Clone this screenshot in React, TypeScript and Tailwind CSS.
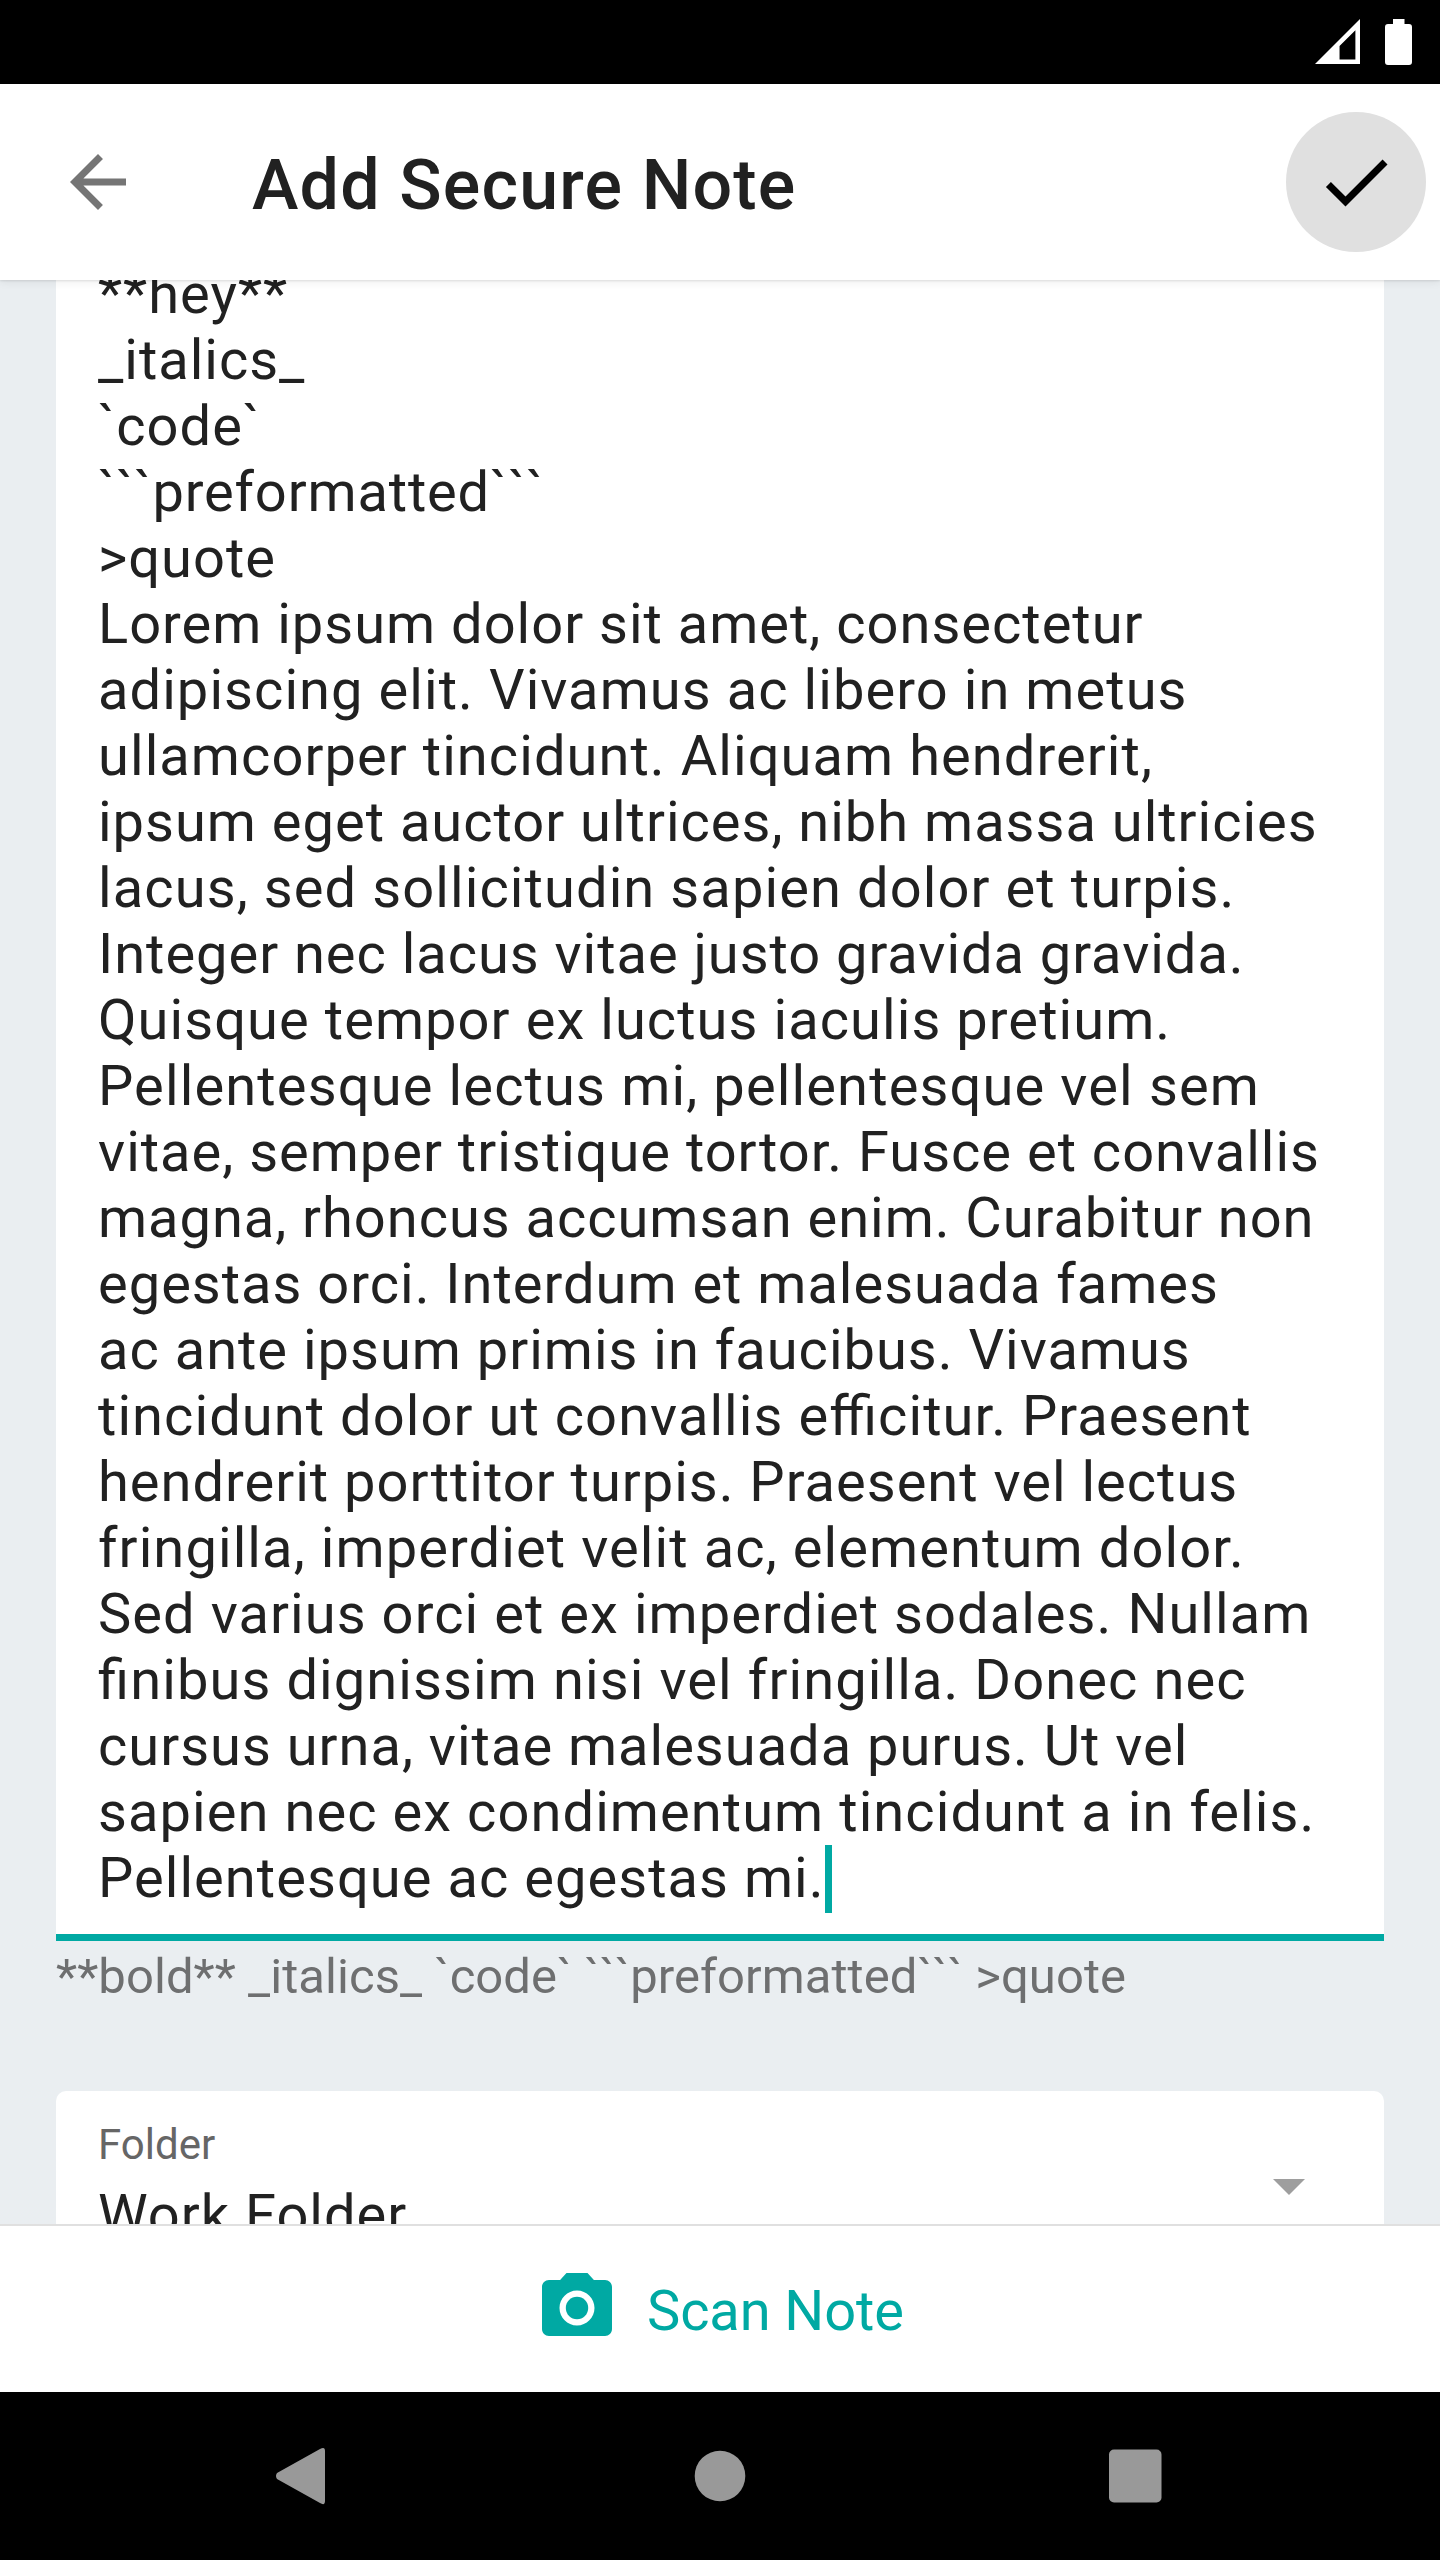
const lines: [string, string?][] = [
  ['**hey**'],
  ['_italics_'],
  ['`code`'],
  ['```preformatted```', 'tracking-[0.84px]'],
  ['>quote'],
  ['Lorem ipsum dolor sit amet, consectetur'],
  ['adipiscing elit. Vivamus ac libero in metus', 'tracking-[1.07px]'],
  ['ullamcorper tincidunt. Aliquam hendrerit,', 'tracking-[1.07px]'],
  ['ipsum eget auctor ultrices, nibh massa ultricies'],
  ['lacus, sed sollicitudin sapien dolor et turpis.', 'tracking-[1.1px]'],
  ['Integer nec lacus vitae justo gravida gravida.', 'tracking-[0.97px]'],
  ['Quisque tempor ex luctus iaculis pretium.', 'tracking-[1.07px]'],
  ['Pellentesque lectus mi, pellentesque vel sem', 'tracking-[1.14px]'],
  ['vitae, semper tristique tortor. Fusce et convallis'],
  ['magna, rhoncus accumsan enim. Curabitur non', 'tracking-[0.97px]'],
  ['egestas orci. Interdum et malesuada fames'],
  ['ac ante ipsum primis in faucibus. Vivamus'],
  ['tincidunt dolor ut convallis efficitur. Praesent', 'tracking-[1.07px]'],
  ['hendrerit porttitor turpis. Praesent vel lectus'],
  ['fringilla, imperdiet velit ac, elementum dolor.', 'tracking-[1.1px]'],
  ['Sed varius orci et ex imperdiet sodales. Nullam', 'tracking-[1.07px]'],
  ['finibus dignissim nisi vel fringilla. Donec nec', 'tracking-[1.1px]'],
  ['cursus urna, vitae malesuada purus. Ut vel'],
  ['sapien nec ex condimentum tincidunt a in felis.', 'tracking-[1.07px]'],
  ['Pellentesque ac egestas mi.', 'tracking-[1.05px]'],
];

export default function App() {
  return (
    <div className="flex h-[2560px] w-[1440px] flex-col overflow-hidden bg-[#eaeef1] font-['Roboto',sans-serif] text-[#212121]">
      <div className="flex h-[84px] shrink-0 items-center justify-end gap-[25px] bg-black pr-[28px]">
        <svg className="-mt-px" width="45" height="45" viewBox="0 0 44 44"><path fillRule="evenodd" d="M44 0V44H0ZM39.500 11V39.500H24V26.500Z" fill="#fff" /></svg>
        <svg width="27" height="46" viewBox="0 0 27 46"><path d="M8 0H19.500V5H24Q27 5 27 8V43Q27 46 24 46H3Q0 46 0 43V8Q0 5 3 5H8Z" fill="#fff" /></svg>
      </div>
      <header className="relative z-10 flex h-[196px] shrink-0 items-center bg-white pr-[14px] pl-[56px] shadow-[0_1px_2px_rgba(0,0,0,0.1),0_3px_8px_rgba(0,0,0,0.06)]">
        <svg width="84" height="84" viewBox="0 0 24 24" fill="#757575"><path d="M20 11H7.830l5.590-5.590L12 4l-8 8 8 8 1.410-1.410L7.830 13H20v-2z" /></svg>
        <h1 className="mt-[7px] ml-[112px] text-[70px] font-medium tracking-[1.15px]">Add Secure Note</h1>
        <div className="ml-auto flex size-[140px] items-center justify-center rounded-full bg-[#e0e0e0]">
          <svg width="84" height="84" viewBox="0 0 24 24"><path d="M9 16.170L4.830 12l-1.420 1.410L9 19 21 7l-1.410-1.410z" /></svg>
        </div>
      </header>
      <main className="min-h-0 flex-1 overflow-hidden px-[56px]">
        <div className="flow-root h-[1661px] border-b-[7px] border-[#00a9a3] bg-white px-[42px]">
          <div className="-mt-[19px] text-[56px] leading-[66px] tracking-[1px] whitespace-pre [font-feature-settings:'liga'_1]">
            {lines.map(([line, tracking], i) => (
              <div key={i} className="flex h-[66px] items-start">
                <span className={tracking}>{line}</span>
                {i === lines.length - 1 && <span className="h-[68px] w-[7px] shrink-0 bg-[#00a9a3]" />}
              </div>
            ))}
          </div>
        </div>
        <p className="mt-[8px] text-[49px] leading-[56px] tracking-[0.06px] text-[#6e6f70]">**bold** _italics_ `code` ```preformatted``` &gt;quote</p>
        <div className="mt-[86px] flex h-[196px] items-start justify-between rounded-[10px] bg-white pr-[79px] pl-[42px]">
          <div>
            <div className="mt-[29px] text-[42px] leading-[50px] text-[#666]">Folder</div>
            <div className="mt-[12px] text-[56px] leading-[66px] tracking-[1px]">Work Folder</div>
          </div>
          <svg className="mt-[88px]" width="32" height="16" viewBox="0 0 32 16"><path d="M0 0H32L16 16Z" fill="#9e9e9e" /></svg>
        </div>
      </main>
      <div className="flex h-[168px] shrink-0 items-start border-t-2 border-[#e0e0e0] bg-white pl-[535px] text-[#00a9a3]">
        <svg className="mt-[40px]" width="84" height="84" viewBox="0 0 24 24" fill="currentColor"><path fillRule="evenodd" d="M9 2L7.170 4H4c-1.100 0-2 .9-2 2v12c0 1.100.9 2 2 2h16c1.100 0 2-.9 2-2V6c0-1.100-.9-2-2-2h-3.170L15 2H9zm3 15c-2.760 0-5-2.240-5-5s2.240-5 5-5 5 2.240 5 5-2.240 5-5 5z" /><circle cx="12" cy="12" r="3.200" /></svg>
        <span className="mt-[52px] ml-[28px] text-[56px] leading-[66px] tracking-[-0.1px]">Scan Note</span>
      </div>
      <nav className="h-[168px] shrink-0 bg-black">
        <svg width="1440" height="168" fill="#999"><path d="M277 81L320 57Q325 54 325 59V109Q325 114 320 111L277 87Q275 84 277 81Z" /><circle cx="720" cy="84" r="25.300" /><rect x="1109" y="57.500" width="52.500" height="53" rx="5" /></svg>
      </nav>
    </div>
  );
}
